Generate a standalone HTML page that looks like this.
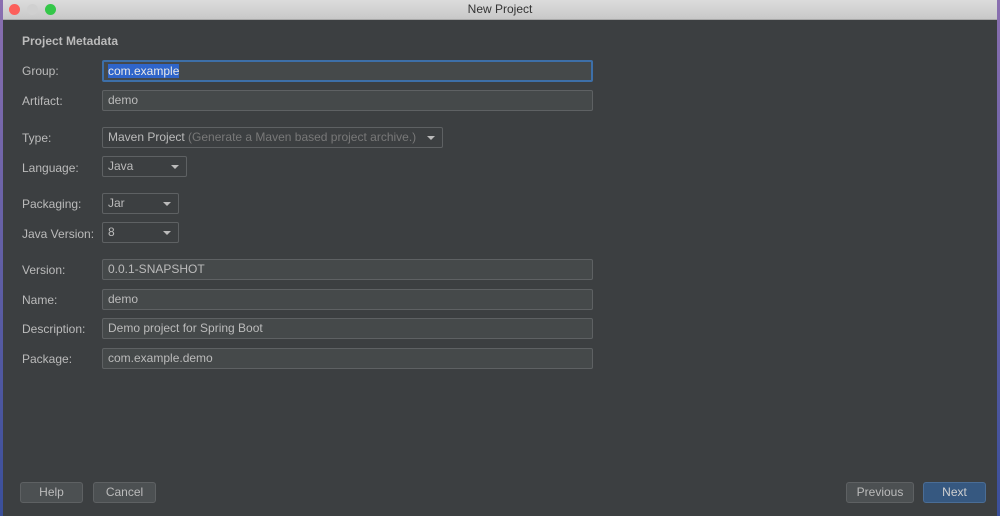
<!DOCTYPE html><html><head><style>
body{margin:0;width:1000px;height:516px;overflow:hidden;background:linear-gradient(#8a6fb0,#3a4f9a);font-family:"Liberation Sans",sans-serif;position:relative}
.win{position:absolute;left:3px;top:0;width:994px;height:516px;background:#3c3f41}
.tb{position:absolute;left:0;top:0;width:994px;height:19px;background:linear-gradient(#dcdcdc,#c8c8c8);border-bottom:1px solid #a8a8a8;text-align:center;font-size:12px;line-height:19px;color:#333}
.d{position:absolute;top:4px;width:11px;height:11px;border-radius:50%}
.l{position:absolute;left:19px;font-size:12px;color:#bbbbbb}
.f{position:absolute;box-sizing:border-box;background:#45494a;border:1px solid #5e6163;color:#bbbbbb;font-size:12px;padding-left:5px;line-height:19px;border-radius:2px}
.dd{background:#3c3f41}
.dd:after{content:"";position:absolute;right:7px;top:8px;border-left:4px solid transparent;border-right:4px solid transparent;border-top:4px solid #bbb}
.b{position:absolute;top:482px;height:21px;box-sizing:border-box;border:1px solid #5e6163;background:#4c5052;border-radius:3px;color:#bbbbbb;font-size:12px;text-align:center;line-height:19px}
</style></head><body><div class="win">
<div class="tb">New Project</div>
<div class="d" style="left:6px;background:#fc605b"></div><div class="d" style="left:24px;background:#d0d0d0"></div><div class="d" style="left:42px;background:#34c749"></div>
<div class="l" style="top:34px;font-weight:bold">Project Metadata</div>
<div class="l" style="top:64px">Group:</div>
<div class="f" style="left:99px;top:60px;width:491px;height:22px;border:2px solid #3d6fa8;line-height:18px;padding-left:4px"><span style="background:#2f65ca;color:#e8e8e8">com.example</span></div>
<div class="l" style="top:94px">Artifact:</div><div class="f" style="left:99px;top:90px;width:491px;height:21px">demo</div>
<div class="l" style="top:131px">Type:</div><div class="f dd" style="left:99px;top:127px;width:341px;height:21px">Maven Project <span style="color:#787878">(Generate a Maven based project archive.)</span></div>
<div class="l" style="top:161px">Language:</div><div class="f dd" style="left:99px;top:156px;width:85px;height:21px">Java</div>
<div class="l" style="top:197px">Packaging:</div><div class="f dd" style="left:99px;top:193px;width:77px;height:21px">Jar</div>
<div class="l" style="top:227px">Java Version:</div><div class="f dd" style="left:99px;top:222px;width:77px;height:21px">8</div>
<div class="l" style="top:263px">Version:</div><div class="f" style="left:99px;top:259px;width:491px;height:21px">0.0.1-SNAPSHOT</div>
<div class="l" style="top:293px">Name:</div><div class="f" style="left:99px;top:289px;width:491px;height:21px">demo</div>
<div class="l" style="top:322px">Description:</div><div class="f" style="left:99px;top:318px;width:491px;height:21px">Demo project for Spring Boot</div>
<div class="l" style="top:352px">Package:</div><div class="f" style="left:99px;top:348px;width:491px;height:21px">com.example.demo</div>
<div class="b" style="left:17px;width:63px">Help</div>
<div class="b" style="left:90px;width:63px">Cancel</div>
<div class="b" style="left:843px;width:68px">Previous</div>
<div class="b" style="left:920px;width:63px;background:#365880;border-color:#4a6d96;color:#d0d0d0">Next</div>
</div></body></html>
